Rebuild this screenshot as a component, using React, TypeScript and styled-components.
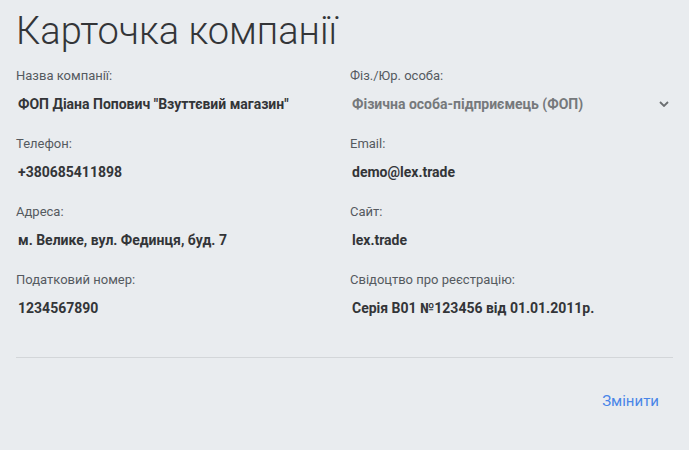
import React from "react";
import styled, { createGlobalStyle } from "styled-components";

const Global = createGlobalStyle`
  html, body { margin: 0; padding: 0; background: #e9ecef; }
  body { font-family: Roboto, "Noto Sans", sans-serif; }
`;

const Page = styled.div`
  padding: 8px 16px 0 16px;
  box-sizing: border-box;
  width: 689px;
  height: 450px;
  background: #e9ecef;
`;

const Title = styled.h1`
  margin: 0;
  font-family: Roboto, sans-serif;
  font-weight: 300;
  font-size: 38px;
  line-height: 46px;
  color: #333538;
`;

const Grid = styled.div`
  display: grid;
  grid-template-columns: 334px 1fr;
  row-gap: 22px;
  margin-top: 14px;
`;

const Field = styled.div`
  display: flex;
  flex-direction: column;
  gap: 10px;
`;

const Label = styled.div`
  font-size: 13px;
  line-height: 16px;
  color: #555a5f;
`;

const Value = styled.div<{ $muted?: boolean }>`
  font-size: 14px;
  line-height: 20px;
  font-weight: 700;
  padding-left: 2px;
  color: ${(p) => (p.$muted ? "#76797c" : "#333538")};
`;

const SelectRow = styled.div`
  display: flex;
  align-items: center;
  justify-content: space-between;
  padding-right: 4px;
`;

const Divider = styled.hr`
  border: none;
  border-top: 1px solid #d3d6d9;
  margin: 39px 0 0 0;
`;

const Footer = styled.div`
  display: flex;
  justify-content: flex-end;
  padding: 33px 14px 0 0;
`;

const LinkButton = styled.button`
  background: none;
  border: none;
  padding: 0;
  font-family: Roboto, sans-serif;
  font-size: 15px;
  line-height: 20px;
  color: #4a86e8;
  cursor: pointer;
`;

const fields: { label: string; value: string; select?: boolean }[] = [
  { label: "Назва компанії:", value: "ФОП Діана Попович \"Взуттєвий магазин\"" },
  { label: "Фіз./Юр. особа:", value: "Фізична особа-підприємець (ФОП)", select: true },
  { label: "Телефон:", value: "+380685411898" },
  { label: "Email:", value: "demo@lex.trade" },
  { label: "Адреса:", value: "м. Велике, вул. Фединця, буд. 7" },
  { label: "Сайт:", value: "lex.trade" },
  { label: "Податковий номер:", value: "1234567890" },
  { label: "Свідоцтво про реєстрацію:", value: "Серія В01 №123456 від 01.01.2011р." },
];

const Chevron = () => (
  <svg width="10" height="6" viewBox="0 0 10 6">
    <path d="M1 1l4 4 4-4" fill="none" stroke="#6b6e71" strokeWidth="1.8" />
  </svg>
);

export default function App() {
  return (
    <>
      <Global />
      <Page>
        <Title>Карточка компанії</Title>
        <Grid>
          {fields.map((f) => (
            <Field key={f.label}>
              <Label>{f.label}</Label>
              {f.select ? (
                <SelectRow>
                  <Value $muted>{f.value}</Value>
                  <Chevron />
                </SelectRow>
              ) : (
                <Value>{f.value}</Value>
              )}
            </Field>
          ))}
        </Grid>
        <Divider />
        <Footer>
          <LinkButton>Змінити</LinkButton>
        </Footer>
      </Page>
    </>
  );
}
